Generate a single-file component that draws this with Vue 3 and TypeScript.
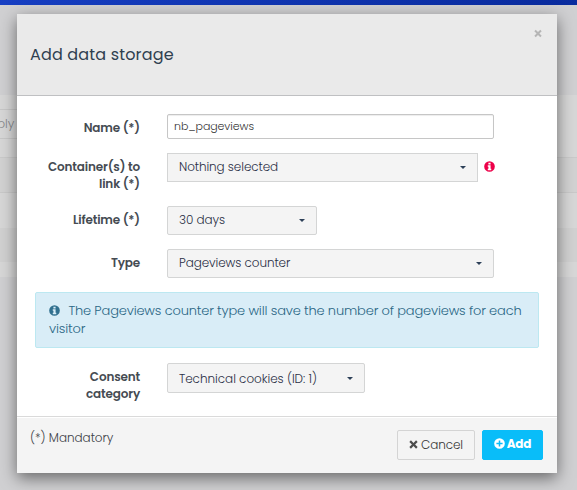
<script setup lang="ts">
import { ref } from 'vue'

const name = ref('nb_pageviews')
const infoPath =
  'M256 8a248 248 0 1 0 0 496 248 248 0 0 0 0-496zM205 80h102v82H205zM175 200h132v164h32v64H175v-64h32v-100h-32z'
const crossPath = 'M110 20L256 166 402 20l90 90-146 146 146 146-90 90-146-146-146 146-90-90 146-146L20 110z'
</script>

<template>
  <div class="screen">
    <div class="page">
      <div class="topbar"></div>
      <div class="page-head"></div>
      <div class="panel">
        <div class="tools"><span class="apply">ply</span></div>
        <div class="row row-head"></div>
        <div class="row row-even"></div>
        <div class="row row-odd"></div>
        <div class="row row-end"></div>
      </div>
    </div>

    <div class="modal">
      <header class="header">
        <h4 class="title">Add data storage</h4>
        <button class="close" aria-label="Close">
          <svg viewBox="0 0 512 512"><path :d="crossPath" /></svg>
        </button>
      </header>

      <main class="body">
        <div class="field field-name">
          <label class="label">Name (*)</label>
          <input v-model="name" class="input" type="text" />
        </div>
        <div class="field field-container">
          <label class="label">Container(s) to<br />link (*)</label>
          <button class="select square wide"><span>Nothing selected</span><i class="caret"></i></button>
          <svg class="help" viewBox="0 0 512 512"><path fill-rule="evenodd" :d="infoPath" /></svg>
        </div>
        <div class="field field-life">
          <label class="label">Lifetime (*)</label>
          <button class="select short"><span>30 days</span><i class="caret"></i></button>
        </div>
        <div class="field field-type">
          <label class="label">Type</label>
          <button class="select full"><span>Pageviews counter</span><i class="caret"></i></button>
        </div>
        <div class="alert">
          <svg class="alert-icon" viewBox="0 0 512 512"><path fill-rule="evenodd" :d="infoPath" /></svg>
          The Pageviews counter type will save the number of pageviews for each<br />visitor
        </div>
        <div class="field">
          <label class="label">Consent<br />category</label>
          <button class="select medium"><span>Technical cookies (ID: 1)</span><i class="caret"></i></button>
        </div>
      </main>

      <footer class="footer">
        <span class="mandatory">(*) Mandatory</span>
        <button class="btn cancel">
          <svg viewBox="0 0 512 512"><path :d="crossPath" /></svg><span>Cancel</span>
        </button>
        <button class="btn add">
          <svg viewBox="0 0 512 512">
            <path fill-rule="evenodd" d="M256 8a248 248 0 1 0 0 496 248 248 0 0 0 0-496zM220 112h72v108h108v72H292v108h-72V292H112v-72h108z" />
          </svg><span>Add</span>
        </button>
      </footer>
    </div>
  </div>
</template>

<style>
html,
body {
  overflow: hidden;
}
</style>

<style scoped>
.screen,
.screen * {
  box-sizing: border-box;
}
.screen {
  position: relative;
  width: 577px;
  height: 490px;
  overflow: hidden;
  background: #d0d0d2;
  color: #3c4147;
  font-family: Poppins, Inter, 'Open Sans', sans-serif;
  font-weight: 300;
  font-size: 12px;
  line-height: 17px;
}
button,
input {
  margin: 0;
  font: inherit;
  color: inherit;
}
span {
  white-space: nowrap;
}
svg {
  fill: currentColor;
  flex: none;
}
.topbar {
  height: 5px;
  background: linear-gradient(90deg, #173fc3, #0a2c9f);
}
.page-head {
  height: 90px;
}
.panel {
  height: 182px;
  background: #d7d7d7;
}
.tools {
  height: 63px;
  padding-top: 14px;
  border-bottom: 1px solid #cacaca;
}
.apply {
  display: block;
  width: 60px;
  height: 30px;
  margin-left: -10px;
  padding: 5px 0 0 6px;
  border: 1px solid #c7c7c7;
  color: #85878a;
}
.row-head {
  height: 35px;
  background: #d2d2d2;
  border-bottom: 1px solid #c9c9c9;
}
.row-even {
  height: 35px;
}
.row-odd {
  height: 34px;
  background: #d1d1d1;
}
.row-end {
  height: 15px;
}
.modal {
  position: absolute;
  left: 17px;
  top: 14px;
  width: 540px;
  height: 459px;
  display: flex;
  flex-direction: column;
  background: #fff;
  box-shadow: 0 5px 15px rgba(0, 0, 0, 0.5);
}
.header {
  height: 82px;
  display: flex;
  justify-content: space-between;
  padding: 15px 15px 0 13px;
  background: #eaeaea;
  border-bottom: 1px solid #bfc0c2;
}
.title {
  margin: 14px 0 0;
  color: #2f4050;
  font-size: 16px;
  font-weight: 400;
  line-height: 24px;
  letter-spacing: 0.16px;
}
.close {
  width: 8px;
  height: 9px;
  padding: 0;
  border: 0;
  background: none;
  color: #b5b5b5;
}
.close svg {
  display: block;
  width: 8px;
  height: 9px;
}
.body {
  height: 320px;
  padding: 18px 18px 0;
}
.field {
  display: flex;
  align-items: flex-start;
}
.label {
  width: 105px;
  margin-right: 27px;
  padding-top: 5px;
  text-align: right;
  font-weight: 600;
  letter-spacing: -0.17px;
  color: #454b52;
}
.field-name {
  height: 39px;
}
.field-container {
  height: 53px;
}
.field-life,
.field-type {
  height: 43px;
}
.input {
  width: 327px;
  height: 25px;
  padding: 0 6px;
  border: 1px solid #c6c6c6;
  border-radius: 2px;
  outline: 0;
  background: #fff;
  box-shadow: inset 0 1px 1px rgba(0, 0, 0, 0.075);
  color: #333;
  font-size: 11px;
  letter-spacing: -0.08px;
}
.select {
  height: 29px;
  display: flex;
  align-items: center;
  justify-content: space-between;
  padding: 0 11px;
  border: 1px solid #d4d5d5;
  border-radius: 2px;
  background: #f4f4f4;
  color: #2b3046;
  letter-spacing: -0.09px;
}
.select span {
  margin-top: -2px;
}
.square {
  border-radius: 0;
}
.wide {
  width: 311px;
}
.short {
  width: 150px;
}
.full {
  width: 327px;
}
.medium {
  width: 198px;
  height: 30px;
  letter-spacing: -0.04px;
}
.medium span {
  margin-top: 0;
}
.caret {
  border: 3px solid transparent;
  border-top-color: #2d4058;
  border-bottom: 0;
}
.help {
  width: 11px;
  height: 11px;
  margin: 8px 0 0 6px;
  color: #ed0049;
}
.alert {
  width: 504px;
  height: 56px;
  margin-bottom: 15px;
  padding: 9px 0 0 13px;
  border: 1px solid #bce8f1;
  border-radius: 2px;
  background: #d9edf7;
  color: #2a6785;
  font-size: 13px;
  line-height: 18px;
  letter-spacing: -0.165px;
  white-space: nowrap;
}
.alert-icon {
  width: 11px;
  height: 11px;
  margin-right: 5px;
  vertical-align: -1px;
  color: #31708f;
}
.footer {
  height: 57px;
  display: flex;
  align-items: flex-start;
  padding: 12px 14px 0 13px;
  border-top: 1px solid #dadada;
  background: #f4f4f4;
  box-shadow: inset 0 1px 0 #fff;
}
.mandatory {
  margin: 0 auto 0 0;
  letter-spacing: -0.04px;
}
.btn {
  width: 78px;
  height: 30px;
  display: flex;
  align-items: center;
  justify-content: center;
  margin-top: 1px;
  padding: 0 0 2px;
  border: 1px solid #d4d4d4;
  border-radius: 2px;
  background: #f4f4f4;
  color: #363636;
  letter-spacing: -0.1px;
}
.cancel svg {
  width: 9px;
  height: 9px;
  margin-right: 3px;
  color: #4b4b4b;
}
.add {
  width: 61px;
  margin-left: 7px;
  border-color: #09bdf9;
  background: #09bdf9;
  color: #fff;
  font-weight: 700;
  letter-spacing: -0.15px;
}
.add svg {
  width: 11px;
  height: 11px;
  margin-right: 2px;
}
.add svg,
.add span {
  margin-top: -1px;
}
</style>
